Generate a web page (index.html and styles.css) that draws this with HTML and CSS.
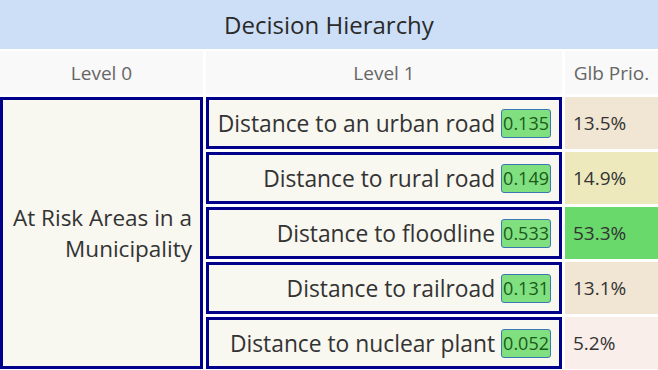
FILE: index.html
```html
<!DOCTYPE html>
<html>
<head>
<meta charset="utf-8">
<link rel="stylesheet" href="styles.css">
</head>
<body>
<div class="title">Decision Hierarchy</div>
<div class="grid">
  <div class="head">Level 0</div>
  <div class="head">Level 1</div>
  <div class="head">Glb Prio.</div>

  <div class="root"><span>At Risk Areas in a<br>Municipality</span></div>

  <div class="node"><span>Distance to an urban road</span><span class="badge">0.135</span></div>
  <div class="prio p1">13.5%</div>

  <div class="node"><span>Distance to rural road</span><span class="badge">0.149</span></div>
  <div class="prio p2">14.9%</div>

  <div class="node"><span>Distance to floodline</span><span class="badge">0.533</span></div>
  <div class="prio p3">53.3%</div>

  <div class="node"><span>Distance to railroad</span><span class="badge">0.131</span></div>
  <div class="prio p4">13.1%</div>

  <div class="node"><span>Distance to nuclear plant</span><span class="badge">0.052</span></div>
  <div class="prio p5">5.2%</div>
</div>
</body>
</html>
```
FILE: styles.css
```css
html, body {
  margin: 0;
  padding: 0;
  background: #ffffff;
}
body {
  font-family: "Open Sans", "DejaVu Sans", sans-serif;
  color: #333333;
  width: 658px;
  height: 370px;
  overflow: hidden;
}
.title {
  height: 49px;
  margin-bottom: 2px;
  background: #cddff6;
  font-size: 24px;
  font-weight: 500;
  display: flex;
  align-items: center;
  justify-content: center;
  color: #2a2a2a;
}
.grid {
  display: grid;
  grid-template-columns: 203px 356px 93px;
  grid-template-rows: 43px repeat(5, 52px);
  column-gap: 3px;
  row-gap: 3px;
}
.head {
  background: #f9f9f9;
  color: #666666;
  font-size: 19px;
  font-weight: 500;
  display: flex;
  align-items: center;
  justify-content: center;
}
.root {
  grid-column: 1;
  grid-row: 2 / span 5;
  box-sizing: border-box;
  border: 3px solid #00008b;
  background: #f8f7f0;
  display: flex;
  align-items: center;
  justify-content: flex-end;
  text-align: right;
  padding-right: 8px;
  font-size: 22.5px;
  line-height: 31px;
}
.node {
  grid-column: 2;
  box-sizing: border-box;
  border: 3px solid #00008b;
  background: #f8f7f0;
  display: flex;
  align-items: center;
  justify-content: flex-end;
  gap: 6px;
  padding-right: 8px;
  font-size: 22.8px;
}
.badge {
  background: #80e080;
  border: 1px solid #3a78b4;
  border-radius: 3px;
  color: #1a5a1a;
  font-size: 18px;
  line-height: 27px;
  padding: 0 1px;
}
.prio {
  grid-column: 3;
  display: flex;
  align-items: center;
  padding-left: 8px;
  font-size: 19px;
}
.p1 { background: #f1e5d3; }
.p2 { background: #ede9bd; }
.p3 { background: #6ad96c; }
.p4 { background: #f1e5d3; }
.p5 { background: #f9eeea; }
```
